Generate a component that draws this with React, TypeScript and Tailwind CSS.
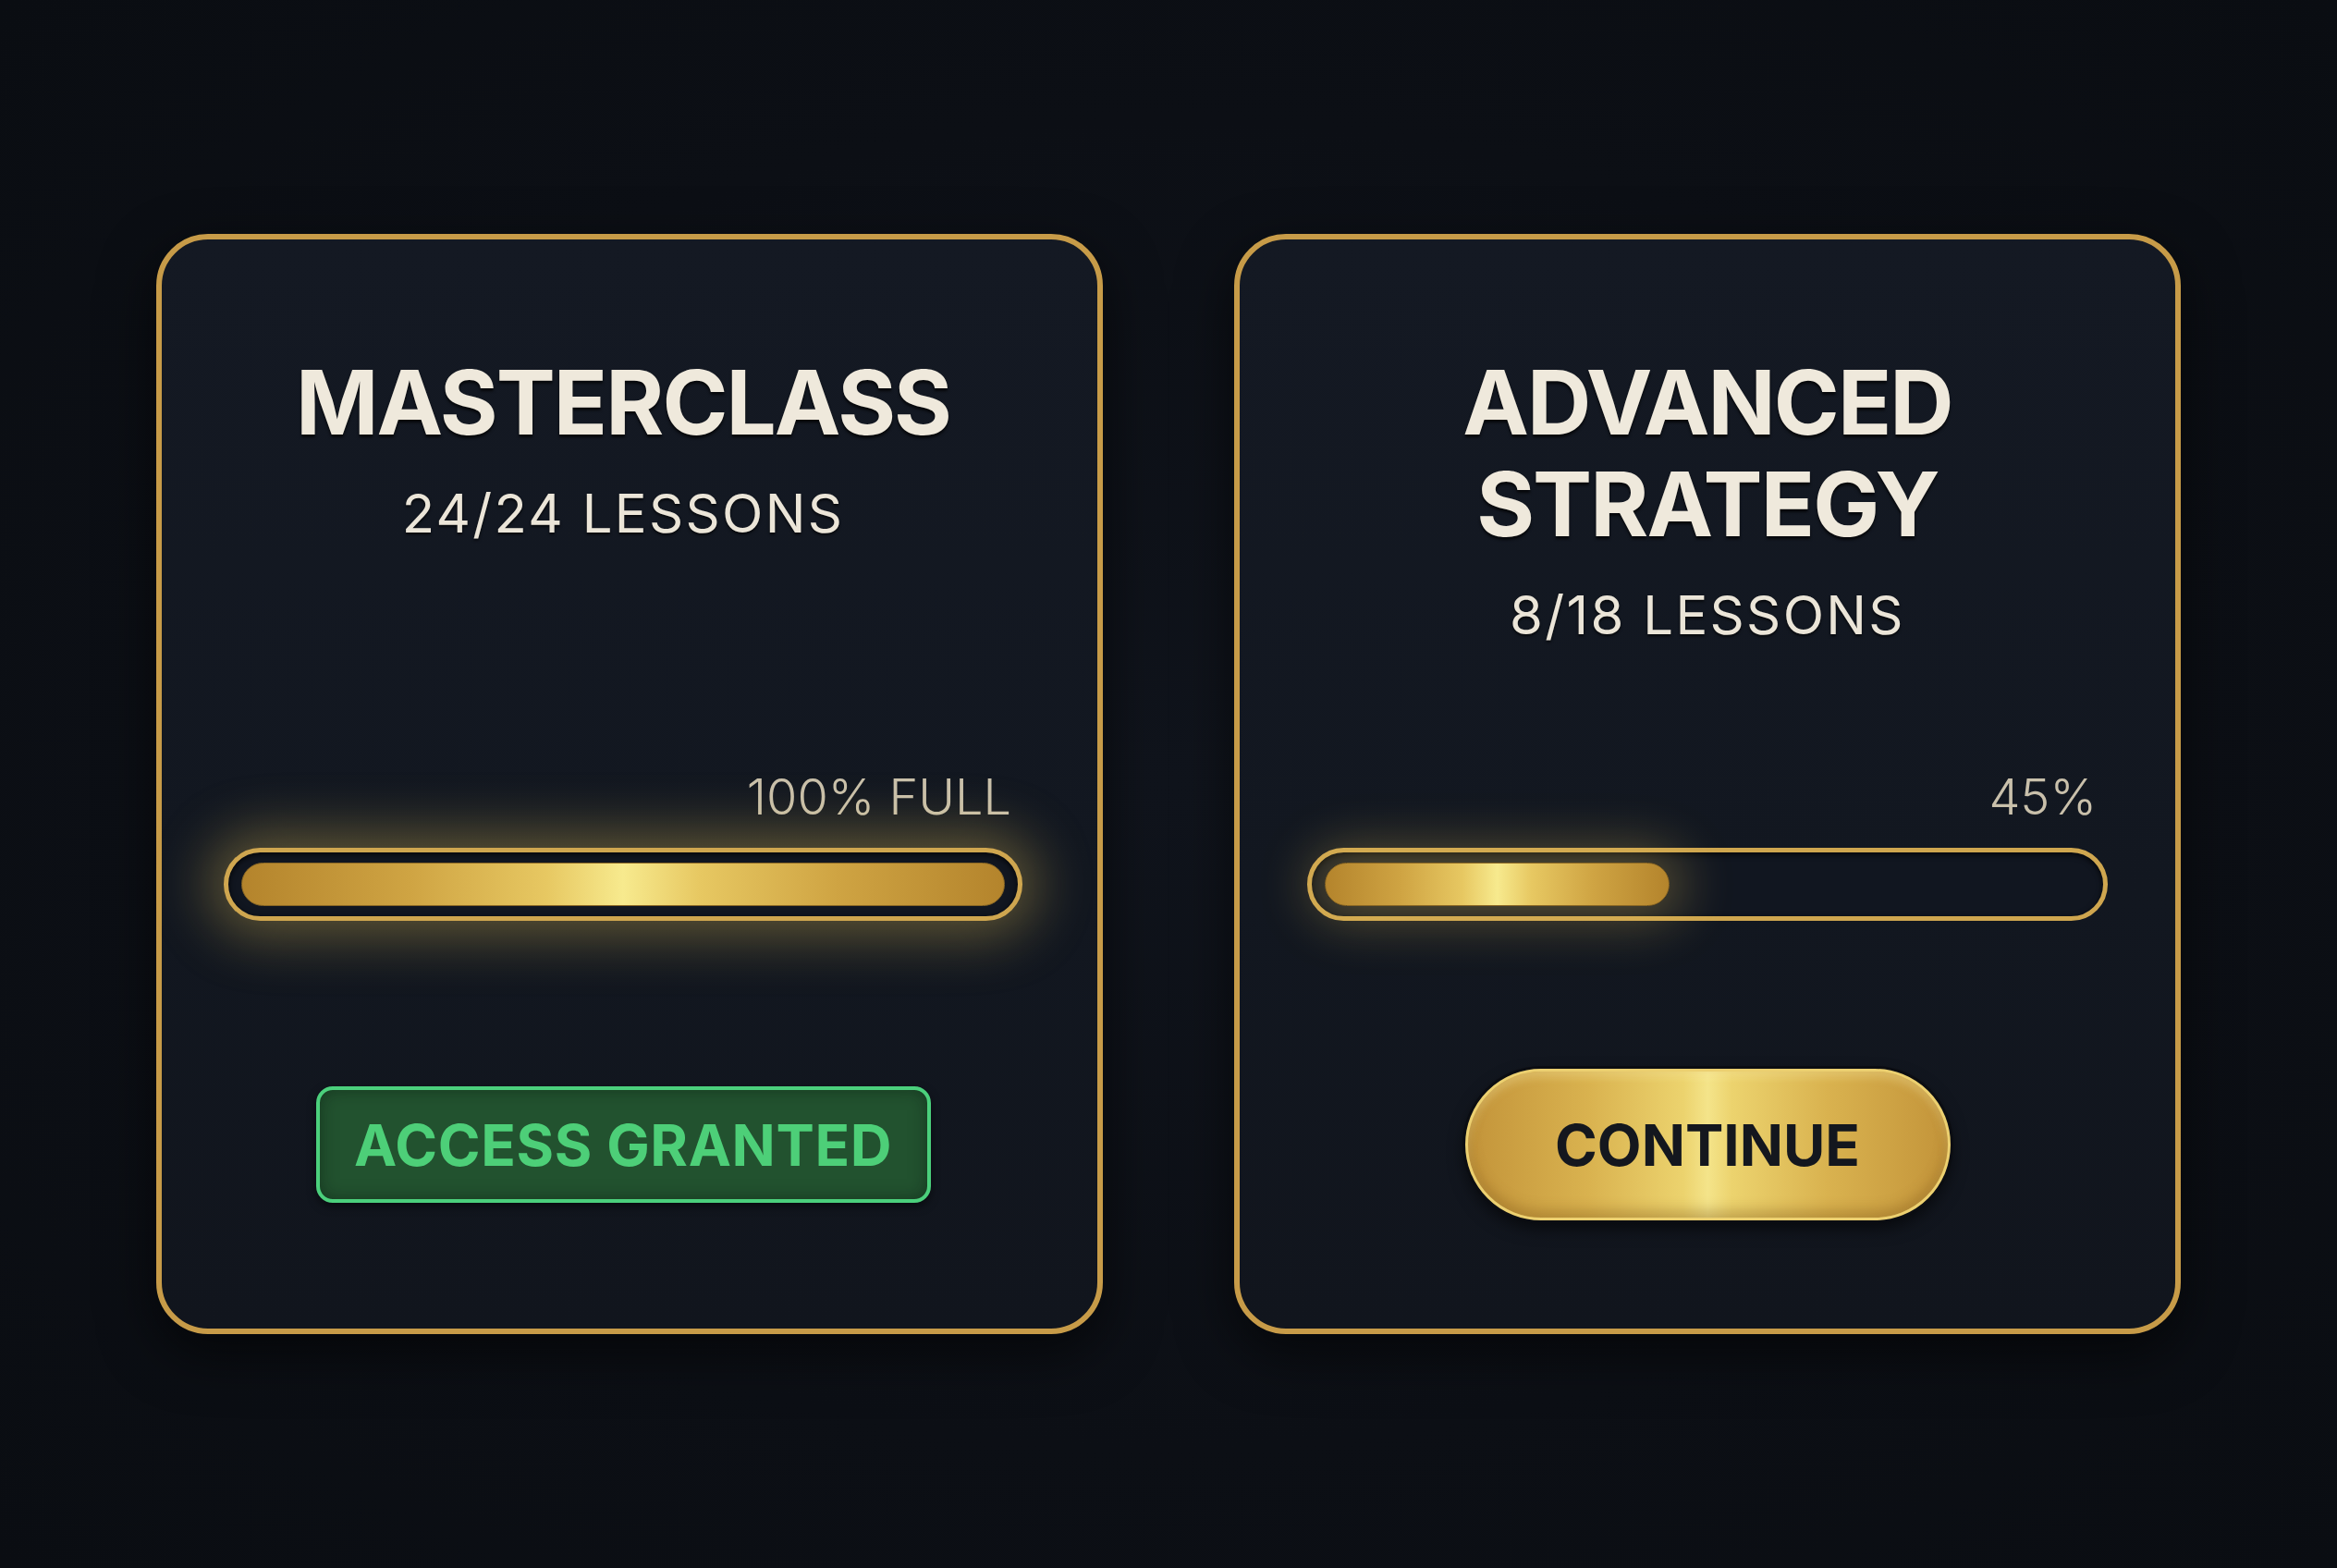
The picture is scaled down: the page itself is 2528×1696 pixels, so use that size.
import React from "react";

interface CourseCardProps {
  title: string[];
  lessons: string;
  label: string;
  percent: number;
  padClass: string;
  action: React.ReactNode;
}

const goldFill =
  "bg-[linear-gradient(90deg,#b4842c_0%,#cfa443_22%,#e7c862_40%,#f7ea8e_50%,#e7c862_60%,#cfa443_78%,#b4842c_100%)]";

function ProgressBar({ percent }: { percent: number }) {
  const full = percent >= 100;
  return (
    <div
      className={
        "relative h-[79px] rounded-full border-[5px] border-[#cfa64f] bg-[#111620] px-[14px] py-[11px] " +
        (full
          ? "shadow-[0_0_60px_16px_rgba(236,200,92,0.36),inset_0_2px_6px_rgba(0,0,0,0.8)]"
          : "shadow-[inset_0_2px_6px_rgba(0,0,0,0.8)]")
      }
    >
      <div
        className={
          "h-full rounded-full border border-[#8a6724] " +
          goldFill +
          (full ? "" : " shadow-[0_0_56px_16px_rgba(236,200,92,0.32)]")
        }
        style={{ width: `${percent}%` }}
      />
    </div>
  );
}

function CourseCard({ title, lessons, label, percent, padClass, action }: CourseCardProps) {
  return (
    <div
      className={
        "flex h-[1190px] w-[1024px] flex-col rounded-[56px] border-[6px] border-[#c79b48] bg-[linear-gradient(180deg,#141923_0%,#121720_60%,#11151d_100%)] shadow-[0_20px_60px_rgba(0,0,0,0.6)] " +
        padClass
      }
    >
      <div className="flex flex-col items-center pt-[121px] text-center">
        <h2 className="text-[96px] font-bold leading-[110px] tracking-[-0.02em] text-[#efe9dc] [text-shadow:0_3px_3px_rgba(0,0,0,0.7)]">
          {title.map((line) => (
            <div key={line}>{line}</div>
          ))}
        </h2>
        <p className="mt-[30px] text-[58px] leading-[70px] tracking-[0.04em] text-[#ebe5d8] [text-shadow:0_2px_3px_rgba(0,0,0,0.7)]">
          {lessons}
        </p>
      </div>

      <div className="mt-auto">
        <div className="mb-[21px] pr-[12px] text-right text-[54px] font-light leading-[68px] text-[#c9c0ab]">
          {label}
        </div>
        <ProgressBar percent={percent} />
      </div>

      <div className="flex h-[441px] items-center justify-center pt-[43px]">{action}</div>
    </div>
  );
}

export default function App() {
  return (
    <div className="flex h-[1696px] w-full items-center justify-center gap-[142px] bg-[radial-gradient(ellipse_at_center,#10141c_0%,#0c0f15_60%,#0a0d12_100%)] font-['Inter','Liberation_Sans',sans-serif]">
      <CourseCard
        title={["MASTERCLASS"]}
        lessons="24/24 LESSONS"
        label="100% FULL"
        percent={100}
        padClass="pl-[67px] pr-[81px]"
        action={
          <button className="flex h-[126px] w-[665px] items-center justify-center rounded-[18px] border-[4px] border-[#4bd07c] bg-[#22522f] text-[62px] font-bold tracking-[0.01em] text-[#4dcf78] shadow-[0_4px_10px_rgba(0,0,0,0.5),inset_0_0_18px_rgba(10,30,18,0.5)]">
            ACCESS GRANTED
          </button>
        }
      />
      <CourseCard
        title={["ADVANCED", "STRATEGY"]}
        lessons="8/18 LESSONS"
        label="45%"
        percent={45}
        padClass="px-[73px]"
        action={
          <button className="relative flex h-[164px] w-[525px] items-center justify-center rounded-full border-[3px] border-[#ecd070] bg-[linear-gradient(90deg,#c3943a_0%,#d9b24f_25%,#ecd36e_45%,#f4e48a_50%,#ecd36e_55%,#d9b24f_75%,#c3943a_100%)] text-[62px] font-bold text-[#14171e] shadow-[0_0_0_3px_#0b0d12,0_8px_18px_rgba(0,0,0,0.6),inset_0_-8px_14px_rgba(120,80,20,0.35),inset_0_6px_10px_rgba(255,240,170,0.35)]">
            CONTINUE
          </button>
        }
      />
    </div>
  );
}
